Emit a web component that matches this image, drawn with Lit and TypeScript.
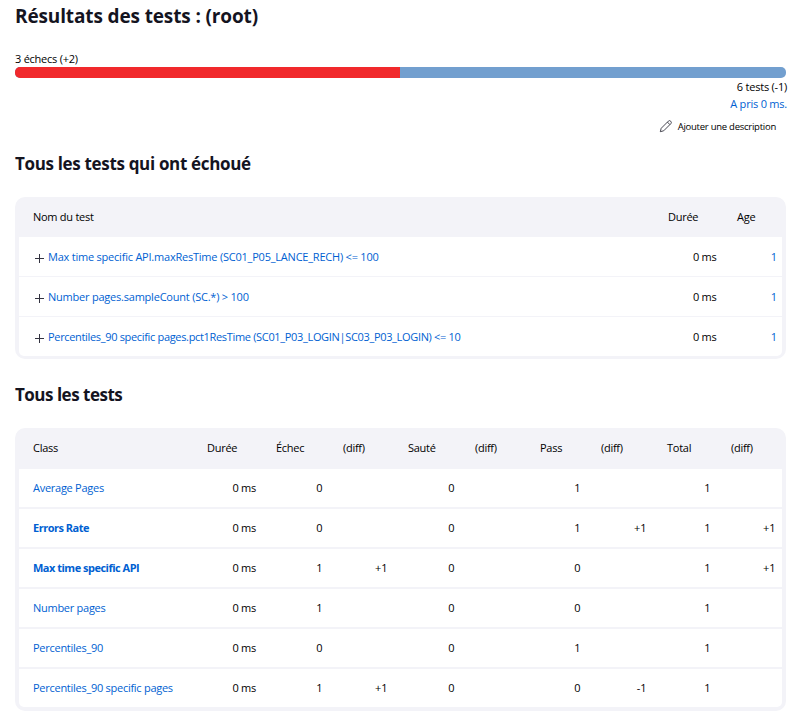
import { LitElement, html, css, svg } from "lit";
import { customElement } from "lit/decorators.js";
import { classMap } from "lit/directives/class-map.js";

const failed = [
  { name: "Max time specific API.maxResTime (SC01_P05_LANCE_RECH) <= 100", fit: "loose" },
  { name: "Number pages.sampleCount (SC.*) > 100", fit: "loose" },
  { name: "Percentiles_90 specific pages.pct1ResTime (SC01_P03_LOGIN|SC03_P03_LOGIN) <= 10", fit: "tight" },
];

const columns = ["Class", "Durée", "Échec", "(diff)", "Sauté", "(diff)", "Pass", "(diff)", "Total", "(diff)"];

const suites = [
  { name: "Average Pages", changed: false, cells: ["0 ms", "0", "", "0", "", "1", "", "1", ""] },
  { name: "Errors Rate", changed: true, cells: ["0 ms", "0", "", "0", "", "1", "+1", "1", "+1"] },
  { name: "Max time specific API", changed: true, cells: ["0 ms", "1", "+1", "0", "", "0", "", "1", "+1"] },
  { name: "Number pages", changed: false, cells: ["0 ms", "1", "", "0", "", "0", "", "1", ""] },
  { name: "Percentiles_90", changed: false, cells: ["0 ms", "0", "", "0", "", "1", "", "1", ""] },
  { name: "Percentiles_90 specific pages", changed: false, cells: ["0 ms", "1", "+1", "0", "", "0", "-1", "1", ""] },
];

const pencil = svg`<path d="M1.3 12.7 2.2 9.3 9.4 2.1Q10.5 1 11.7 2.2T11.9 4.6L4.7 11.8ZM8.4 3.1 10.9 5.6"/>`;

@customElement("app-root")
export class AppRoot extends LitElement {
  static styles = css`
    :host {
      display: block;
      box-sizing: border-box;
      height: 719px;
      padding: 0 17px 0 15px;
      overflow: hidden;
      background: #fff;
      color: #14141f;
      font-family: "Open Sans", "Noto Sans", sans-serif;
      font-size: 11px;
      line-height: 16px;
    }
    h1, h2 { margin: 0; font-weight: 700; white-space: nowrap; }
    h1 { height: 51px; font-size: 19px; line-height: 32px; letter-spacing: -0.13px; }
    h2 { font-size: 17px; line-height: 24px; }
    h2.failed { margin: 17px 0 21px; letter-spacing: -0.33px; }
    h2.all { margin: 24px 0 21px; letter-spacing: -0.5px; }
    a { color: #005fd2; text-decoration: none; }
    .count { color: #000; letter-spacing: -0.25px; }
    .bar { display: flex; height: 11px; border-radius: 5px; overflow: hidden; background: #729fcf; }
    .bar span { margin-right: 1px; margin-left: -1px; background: #f1292c; }
    .summary { display: flex; flex-direction: column; align-items: flex-end; height: 57px; margin-right: -1px; }
    .summary .line { height: 17px; line-height: 17px; letter-spacing: -0.22px; }
    .summary div { color: #000; }
    .edit { display: flex; align-items: center; gap: 5px; margin: 6px 11px 0 0; height: 18px; font-size: 9.5px; letter-spacing: -0.25px; }
    .pen { width: 14px; height: 14px; margin-top: -1px; fill: none; stroke: #333340; stroke-width: 0.9; }
    .table { background: #f3f3f8; border-radius: 10px; padding: 0 4px 3px; }
    .body { display: grid; gap: 1px; border-radius: 0 0 5px 5px; overflow: hidden; }
    .row { display: grid; grid-template-columns: 635px 69px 59px; background: #fff; height: 39px; line-height: 40px; color: #000; }
    .head { background: none; height: 40px; }
    .row > * { padding: 0 6px 0 14px; white-space: nowrap; letter-spacing: -0.27px; }
    .row > .num { text-align: right; }
    .row > .count-cell { letter-spacing: 0; padding-right: 6.5px; }
    .row > a.num { letter-spacing: 0; padding-right: 5px; }
    .row > .time { padding-right: 6.5px; }
    .wide { padding-bottom: 4px; }
    .wide .row { grid-template-columns: 174px 69px 67px 65px 67px 65px 61px 66px 64px 65px; height: 38px; line-height: 38px; }
    .wide .row > .time { padding-right: 6px; }
    .wide .head { height: 41px; line-height: 40px; }
    .wide .body { gap: 2px; }
    .wide .row > .bold { font-weight: 700; letter-spacing: -0.5px; }
    .test { display: flex; align-items: center; gap: 4px; }
    .loose { letter-spacing: -0.22px; }
    .tight { letter-spacing: -0.33px; }
    .plus { width: 10px; height: 10px; margin: 2px 0 0 1px; stroke: #333340; stroke-width: 1; }
  `;

  render() {
    return html`
      <h1>Résultats des tests : (root)</h1>
      <div class="count">3 échecs (+2)</div>
      <div class="bar"><span style="width:${(3 / 6) * 100}%"></span></div>
      <div class="summary">
        <div class="line">6 tests (-1)</div>
        <a class="line">A pris 0 ms.</a>
        <div class="edit"><svg class="pen" viewBox="0 0 14 14">${pencil}</svg><span>Ajouter une description</span></div>
      </div>
      <h2 class="failed">Tous les tests qui ont échoué</h2>
      <div class="table">
        <div class="row head"><div>Nom du test</div><div>Durée</div><div>Age</div></div>
        <div class="body">
          ${failed.map((t) => html`<div class="row">
            <div class="test">
              <svg class="plus" viewBox="0 0 10 10"><path d="M5.5 1v9M1 5.5h9" /></svg>
              <a class=${t.fit}>${t.name}</a>
            </div>
            <div class="num time">0 ms</div>
            <a class="num">1</a>
          </div>`)}
        </div>
      </div>
      <h2 class="all">Tous les tests</h2>
      <div class="table wide">
        <div class="row head">${columns.map((c) => html`<div>${c}</div>`)}</div>
        <div class="body">
          ${suites.map((s) => html`<div class="row">
            <a class=${classMap({ bold: s.changed })}>${s.name}</a>
            ${s.cells.map((c, i) => html`<div class=${classMap({ num: true, time: i === 0, "count-cell": i > 0 })}>${c}</div>`)}
          </div>`)}
        </div>
      </div>
    `;
  }
}
